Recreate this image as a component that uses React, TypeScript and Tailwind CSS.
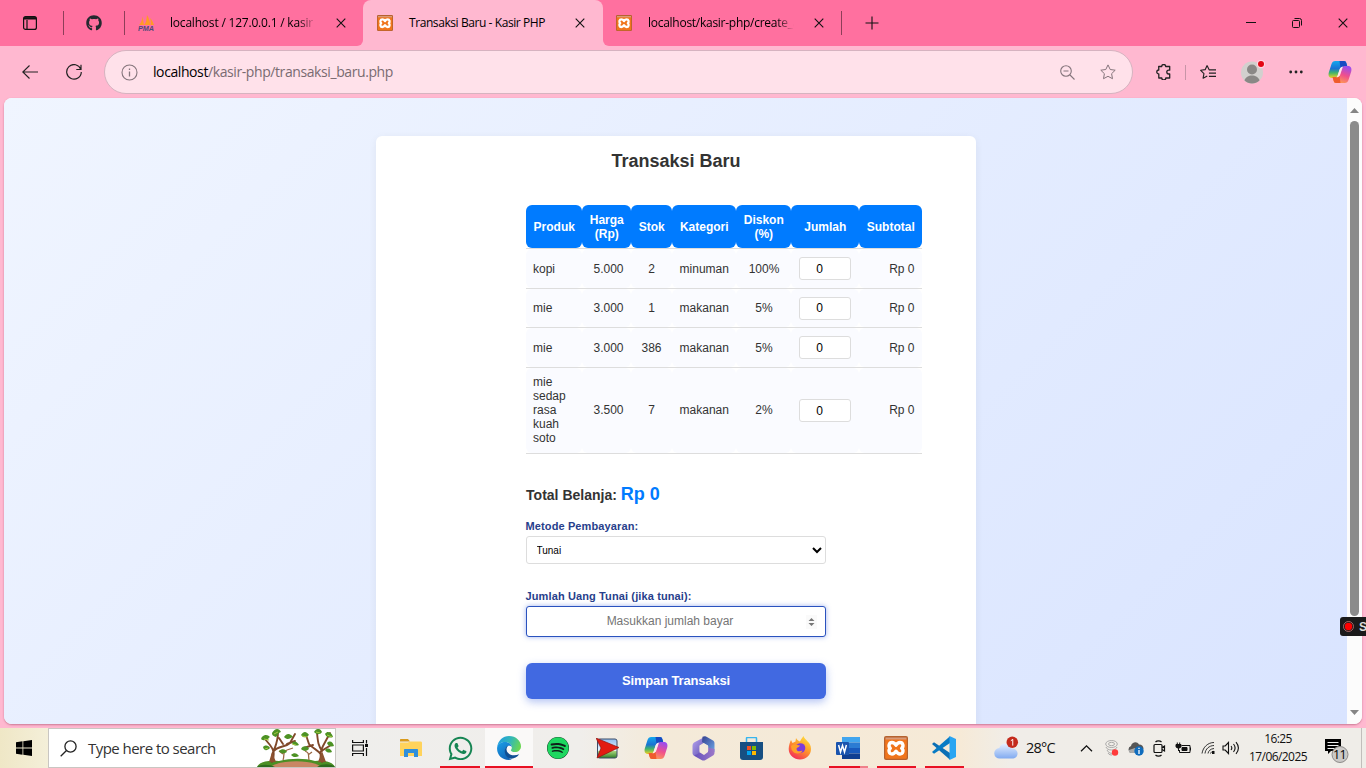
import type { ReactNode } from "react";
import { FaGithub, FaSpotify, FaWhatsapp } from "react-icons/fa";

const ui = "font-['Open_Sans','Noto_Sans',sans-serif]";

function CloseX({ size = 10 }: { size?: number }) {
  return (
    <svg width={size} height={size} viewBox="0 0 10 10" fill="none" stroke="#111" strokeWidth="1.1">
      <path d="M.7.7l8.6 8.6M9.3.7L.7 9.3" />
    </svg>
  );
}

function Xampp({ size }: { size: number }) {
  return (
    <svg className="shrink-0" width={size} height={size} viewBox="0 0 24 24">
      <rect width="24" height="24" rx="2" fill="#b5622f" />
      <rect x="1.200" y="2.200" width="21.600" height="20.600" rx="1.500" fill="#f0751c" />
      <path d="M1.500 1.500h21v2h-21z" fill="#d99a78" />
      <path
        d="M12 9.200C11 7.500 10 6.500 8 6.500 5 6.500 4 10.300 6.300 12.300 4 14.300 5 18 8 18c2 0 3-1.200 4-2.800 1 1.600 2 2.800 4 2.800 3 0 4-3.700 1.700-5.700C20 10.300 19 6.500 16 6.500c-2 0-3 1-4 2.700z"
        fill="none"
        stroke="#fff"
        strokeWidth="3.400"
        strokeLinejoin="round"
      />
    </svg>
  );
}

function Copilot({ size, id }: { size: number; id: string }) {
  return (
    <svg width={size} height={size} viewBox="0 0 24 24">
      <defs>
        <linearGradient id={id + "a"} x1="0" y1="0" x2="0" y2="1">
          <stop offset="0" stopColor="#14a8ee" />
          <stop offset=".45" stopColor="#1a72d2" />
          <stop offset=".7" stopColor="#42b568" />
          <stop offset="1" stopColor="#f4cf24" />
        </linearGradient>
        <linearGradient id={id + "b"} x1=".7" y1="0" x2=".3" y2="1">
          <stop offset="0" stopColor="#9a4cf0" />
          <stop offset=".5" stopColor="#f0508c" />
          <stop offset="1" stopColor="#ffa052" />
        </linearGradient>
      </defs>
      <path d="M11 1h5c1.500 0 2 .8 2.500 2.500L19.500 7H15c-2 0-2.800 1-3.300 2.500L9.500 16c-.5 1.500-1 2-2.500 2H4C1 18 0 15.500.8 12.500L3.500 4C4.200 2 5.200 1 7.300 1z" fill={`url(#${id}a)`} />
      <path d="M11.500 1H16c1.500 0 2 .8 2.500 2.500L19.500 7H15l-2.500 1z" fill="#174ac2" />
      <path d="M13 23H8c-1.500 0-2-.8-2.500-2.500L4.500 17H9c2 0 2.800-1 3.300-2.500L14.500 8c.5-1.500 1-2 2.500-2h3c3 0 4 2.500 3.200 5.500L20.500 20c-.7 2-1.700 3-3.800 3z" fill={`url(#${id}b)`} />
      <path d="M12.500 23H8c-1.500 0-2-.8-2.500-2.500L4.500 17H9l2.500-1z" fill="#ef5b2d" />
      <path d="M11.500 9.500C12.200 7.500 13.500 6.500 15.500 6.500c-1 .6-1.300 1.200-1.600 2.200L12 14.500c-.7 2-1.800 2.800-3.700 2.800 1-.6 1.200-1.300 1.500-2.200z" fill="#fde8ec" />
    </svg>
  );
}

function TabBar() {
  return (
    <div className={`${ui} flex h-[46px] shrink-0 bg-[#ffb8d0] text-[12px] text-black`}>
      <div className="flex w-[363px] items-center rounded-br-md bg-[#ff709f]">
        <div className="flex w-[63px] justify-center pr-[3px]">
          <svg width="14" height="14" viewBox="0 0 14 14" fill="none" stroke="#111" strokeWidth="1.200">
            <rect x=".6" y=".6" width="12.800" height="12.800" rx="2" />
            <path d="M1 2.300h12" strokeWidth="2.400" />
            <path d="M4 4v9" />
          </svg>
        </div>
        <div className="h-6 w-px bg-[#8d3e58]" />
        <div className="flex w-[60px] justify-center">
          <FaGithub size={16} color="#24292f" />
        </div>
        <div className="h-6 w-px bg-[#8d3e58]" />
        <svg className="ml-[13px]" width="17" height="16" viewBox="0 0 17 16">
          <path d="M1 10C4 7 4 4 4.500 1.500L6 10zM6 10c2.500-3 2.500-6 3-10 2 3 3 6 3 10zM12.500 10c.5-3 0-5-.5-7 2.500 2 3 5 4 7z" fill="#ff9a25" />
          <text x="0" y="15.500" fontFamily="Liberation Sans" fontWeight="bold" fontStyle="italic" fontSize="7" textLength="16" lengthAdjust="spacingAndGlyphs" fill="#4c4a78">PMA</text>
        </svg>
        <div className="ml-[15px] w-[146px] overflow-hidden whitespace-nowrap tracking-[-0.2px] [mask-image:linear-gradient(90deg,#000_88%,transparent_100%)]">
          localhost / 127.0.0.1 / kasir |
        </div>
        <div className="ml-[20px]"><CloseX /></div>
      </div>
      <div className="w-[240px] bg-[#ff709f]">
        <div className="flex h-[46px] items-center rounded-t-lg bg-[#ffb8d0] pl-[14px]">
          <Xampp size={16} />
          <div className="ml-[16px] w-[166px] whitespace-nowrap tracking-[-0.42px]">Transaksi Baru - Kasir PHP</div>
          <CloseX />
        </div>
      </div>
      <div className="flex flex-1 items-center rounded-bl-md bg-[#ff709f] pl-[13px]">
        <Xampp size={16} />
        <div className="ml-[16px] w-[146px] overflow-hidden whitespace-nowrap tracking-[-0.27px] [mask-image:linear-gradient(90deg,#000_88%,transparent_100%)]">
          localhost/kasir-php/create_a
        </div>
        <div className="ml-[20px]"><CloseX /></div>
        <div className="ml-[17px] h-6 w-px bg-[#8d3e58]" />
        <svg className="ml-[23px]" width="14" height="14" viewBox="0 0 14 14" stroke="#111" strokeWidth="1.100">
          <path d="M7 .5v13M.5 7h13" />
        </svg>
        <div className="ml-auto flex items-center gap-[36px] pr-[18px]">
          <svg width="10" height="10" viewBox="0 0 10 10" stroke="#111"><path d="M0 4.500h10" /></svg>
          <svg width="10" height="10" viewBox="0 0 10 10" fill="none" stroke="#111">
            <rect x=".5" y="2.500" width="7" height="7" rx="1" />
            <path d="M2.500.5h5a2 2 0 012 2v5" />
          </svg>
          <CloseX />
        </div>
      </div>
    </div>
  );
}

const star = "M8 .9l2.200 4.600 5 .7-3.600 3.500.9 5L8 12.300l-4.500 2.400.9-5L.8 6.200l5-.7z";

function Toolbar() {
  return (
    <div className={`${ui} flex h-[52px] shrink-0 items-center bg-[#ffb8d0]`}>
      <svg className="ml-[22px]" width="16" height="14" viewBox="0 0 16 14" fill="none" stroke="#222" strokeWidth="1.100">
        <path d="M16 7H.8M7.500.5L.8 7l6.700 6.500" />
      </svg>
      <svg className="ml-[28px]" width="16" height="16" viewBox="0 0 16 16" fill="none" stroke="#222" strokeWidth="1.200">
        <path d="M14.800 5.200A7.300 7.300 0 1015.300 8M15 .8v4.700h-4.700" />
      </svg>
      <div className="ml-[22px] flex h-[44px] w-[1029px] items-center rounded-full border border-[#d6b3c0] bg-[#ffe1ea] pl-[16px]">
        <svg width="17" height="17" viewBox="0 0 17 17" fill="none" stroke="#85757c" strokeWidth="1.100">
          <circle cx="8.500" cy="8.500" r="7.500" />
          <path d="M8.500 7.500V12.500M8.500 4.400V6" strokeWidth="1.300" />
        </svg>
        <div className="ml-[15px] pb-px whitespace-nowrap text-[14px] tracking-[-0.41px] text-[#796b71]">
          <span className="text-black">localhost</span>/kasir-php/transaksi_baru.php
        </div>
        <svg className="mr-[25px] ml-auto" width="15" height="15" viewBox="0 0 15 15" fill="none" stroke="#85757c" strokeWidth="1.100">
          <circle cx="6" cy="6" r="5.300" />
          <path d="M10 10l4.500 4.500M3.500 6h5" />
        </svg>
        <svg className="mr-[16px]" width="16" height="16" viewBox="0 0 16 16" fill="none" stroke="#85757c" strokeLinejoin="round">
          <path d={star} />
        </svg>
      </div>
      <svg className="ml-[23px]" width="15" height="16" viewBox="0 0 15 16" fill="none" stroke="#222" strokeWidth="1.300" strokeLinejoin="round">
        <path d="M2.700 2.500h3a2 2 0 014 0h4v3.700h-1a1.900 1.900 0 000 3.800h1v4H9.800a2 2 0 01-4 0h-3V10a2 2 0 010-4z" />
      </svg>
      <div className="ml-[14px] h-[15px] w-px bg-[#c795a7]" />
      <svg className="ml-[14px]" width="16" height="16" viewBox="0 0 17 16" fill="none" stroke="#222" strokeWidth="1.200" strokeLinejoin="round">
        <path d="M7.500 1L5.500 5.500.7 6.200l3.500 3.500-.9 4.900 4.400-2.400M7.500 1l2.200 4.700H17M9.500 9.200H17M9.500 12.700H17" />
      </svg>
      <svg className="ml-[25px]" width="24" height="24" viewBox="0 0 24 24">
        <circle cx="11" cy="12.500" r="11" fill="#d2d0ce" />
        <circle cx="11" cy="9.500" r="5" fill="#8a8886" />
        <path d="M3.500 20.500c1-3.500 4-5 7.500-5s6.500 1.500 7.500 5c-4 4-11 4-15 0z" fill="#8a8886" />
        <circle cx="20" cy="4" r="4.200" fill="#ffd5e1" />
        <circle cx="20" cy="4" r="3" fill="#e30613" />
      </svg>
      <svg className="ml-[24px]" width="14" height="4" viewBox="0 0 14 4" fill="#222">
        <circle cx="1.700" cy="2" r="1.400" /><circle cx="7" cy="2" r="1.400" /><circle cx="12.300" cy="2" r="1.400" />
      </svg>
      <div className="ml-[25px]"><Copilot size={24} id="top" /></div>
    </div>
  );
}

const columns = "grid grid-cols-[56px_49px_41px_64px_55px_68px_63px]";
const products = [
  { name: "kopi", price: "5.000", stock: "2", category: "minuman", discount: "100%", height: "h-[40px]" },
  { name: "mie", price: "3.000", stock: "1", category: "makanan", discount: "5%", height: "h-[39px]" },
  { name: "mie", price: "3.000", stock: "386", category: "makanan", discount: "5%", height: "h-[40px]" },
  { name: "mie sedap rasa kuah soto", price: "3.500", stock: "7", category: "makanan", discount: "2%", height: "h-[86px] leading-[14px]" },
];

function Cell({ children, className }: { children: ReactNode; className: string }) {
  return <div className={`flex items-center rounded-md bg-[#fafbff] ${className}`}>{children}</div>;
}

function ProductTable() {
  return (
    <div className="w-[396px] text-[12px] leading-[14px] text-[#333]">
      <div className={`${columns} h-[44px] border-b border-[#ddd] text-center font-bold text-white`}>
        {["Produk", "Harga (Rp)", "Stok", "Kategori", "Diskon (%)", "Jumlah", "Subtotal"].map((h) => (
          <div key={h} className="flex items-center justify-center rounded-md bg-[#007bff] pr-[4px] pl-[5.5px]">{h}</div>
        ))}
      </div>
      {products.map((p, i) => (
        <div key={i} className={`${columns} ${p.height} border-b border-[#ddd]`}>
          <Cell className={i === 3 ? "pr-[10px] pb-[2px] pl-[7.5px]" : "pr-[10px] pl-[7.5px]"}>{p.name}</Cell>
          <Cell className={i === 3 ? "justify-end pr-[7px] pb-[2px]" : "justify-end pr-[7px]"}>{p.price}</Cell>
          <Cell className={i === 3 ? "justify-center pb-[2px] pl-px" : "justify-center pl-px"}>{p.stock}</Cell>
          <Cell className={i === 3 ? "justify-center pb-[2px] pl-[1.5px]" : "justify-center pl-[1.5px]"}>{p.category}</Cell>
          <Cell className={i === 3 ? "justify-center pb-[2px] pl-[2px]" : "justify-center pl-[2px]"}>{p.discount}</Cell>
          <Cell className="justify-center">
            <input defaultValue="0" className="h-[23px] w-[52px] rounded-[3px] border border-[#ddd] bg-white pr-[10px] text-center text-black" />
          </Cell>
          <Cell className={i === 3 ? "justify-end pr-[7px] pb-[2px]" : "justify-end pr-[7px]"}>Rp 0</Cell>
        </div>
      ))}
    </div>
  );
}

function Page() {
  return (
    <div className="flex h-[630px] shrink-0 bg-[#ffb8d0] px-1 pb-1">
      <div className="flex flex-1 overflow-hidden rounded-lg bg-white shadow-[0_1px_2px_rgba(150,60,90,0.5)]">
        <div className="flex flex-1 justify-center overflow-hidden bg-linear-135 from-[#f0f5ff] to-[#d9e4ff] pt-[38px] font-['Liberation_Sans',Arial,sans-serif]">
          <div className="h-[640px] w-[600px] rounded-md bg-white pl-[150px] shadow-[0_2px_8px_rgba(0,0,0,0.06)]">
            <h1 className="w-[301px] pt-[14px] text-center text-[18px] leading-[22px] font-bold text-[#333]">Transaksi Baru</h1>
            <div className="pt-[33px]"><ProductTable /></div>
            <div className="mt-[29px] h-[22px] pl-[0.6px] text-[14px] leading-[22px] font-bold whitespace-nowrap text-[#333]">
              Total Belanja: <span className="text-[18px] text-[#007bff]">Rp 0</span>
            </div>
            <div className="mt-[14px] h-[17px] text-[11px] leading-[14px] font-bold tracking-[0.12px] text-[#27408b]">Metode Pembayaran:</div>
            <select className="block h-[28px] w-[300px] rounded-[3px] border border-[#ddd] bg-white px-[6px] text-[10px] text-black">
              <option>Tunai</option>
            </select>
            <div className="mt-[25px] h-[17px] text-[11px] leading-[14px] font-bold tracking-[0.12px] text-[#27408b]">Jumlah Uang Tunai (jika tunai):</div>
            <div className="flex h-[31px] w-[300px] items-center rounded-[3px] border border-[#2a52be] bg-white pr-[8px] shadow-[0_0_5px_rgba(65,105,225,0.5)]">
              <input placeholder="Masukkan jumlah bayar" className="h-full min-w-0 flex-1 pb-[2px] pl-[8px] text-center text-[12px] outline-none placeholder:text-[#757575]" />
              <div className="grid h-[14px] w-[11px] place-items-center bg-[#fafafa]">
                <svg width="7" height="8" viewBox="0 0 7 8" fill="#777"><path d="M.5 3L3.500 0l3 3zM.5 5l3 3 3-3z" /></svg>
              </div>
            </div>
            <button className="mt-[26px] block h-[36px] w-[300px] rounded-md bg-[#4169e1] pb-px pl-px text-[14px] font-bold text-white shadow-[0_3px_8px_rgba(65,105,225,0.4)]">
              <span className="inline-block text-[13px] tracking-[-0.15px]">Simpan Transaksi</span>
            </button>
          </div>
        </div>
        <div className="flex w-[15px] flex-col items-center bg-[#fcfcfc] pt-[10px] pb-[9px]">
          <svg width="9" height="5" viewBox="0 0 9 5" fill="#858585"><path d="M0 5l4.500-5L9 5z" /></svg>
          <div className="mt-[8px] h-[495px] w-[9px] rounded-full bg-[#8b8b8b]" />
          <svg className="mt-auto" width="9" height="5" viewBox="0 0 9 5" fill="#858585"><path d="M0 0h9L4.500 5z" /></svg>
        </div>
      </div>
    </div>
  );
}

function Trees() {
  return (
    <svg width="78" height="38" viewBox="0 0 78 38" fill="none">
      <path d="M0 38c3-6 12-7 22-6 12-3 26-3 36 0 8-1 17 0 20 6z" fill="#4c8f25" />
      <path d="M14 38c6-7 42-8 50 0z" fill="#c98664" />
      <path d="M0 38c4-3 12-3 18 0zM60 38c6-4 15-3 18 0z" fill="#2d6b1d" />
      <path d="M15 33c3-8 2-12-2-17L8 10M15 27c2-8 6-12 6-24M16 23c5-7 12-4 17-9l5-9M26 15l-4-6M30 15l8-3M65 33c-3-8-1-12 1-16l7-13M65 27c-4-7-8-6-13-12l-3-9M65 22c-4-6-4-9-5-18M56 16l-9 3M66 21l8-5" stroke="#80492a" strokeWidth="1.900" strokeLinecap="round" />
      <path d="M12 33l3-10 4 10zM61 33l4-11 4 11z" fill="#8d5230" />
      <path d="M26 31c2-5-1-8 4-10l6-2M26 25l-4-3M52 31c-1-5 1-7-4-9M51 26l4-3" stroke="#9a6843" strokeWidth="1.300" />
      <g fill="#4d9224">
        <path d="M15 4c3-5 7-5 9-1-2 0-3 3-5 5-2-1-4-1-4-4zM5 8c3-3 6-2 8 0-2 1-2 4-5 3-3 1-5-1-3-3zM6 18c3-3 6-1 7 1-3 3-6 3-7-1zM27 8c3-5 7-3 9 0-3 1-5 4-9 0zM35 14c3-3 5-1 7 2-3 1-5 1-7-2zM22 22c3-3 7-2 8 1-3 2-6 2-8-1z" />
        <path d="M44 6c3-5 6-3 8 0-2 2-5 4-8 0zM57 3c3-5 7-3 8 0-2 3-5 3-8 0zM68 5c3-4 7-1 8 3-4 1-6 1-8-3zM70 14c3-3 6-1 7 3-3 1-6 0-7-3zM44 20c2-4 7-3 8 0-3 3-6 2-8 0zM34 26c3-3 6-2 8 1-4 2-6 1-8-1zM68 21c3-3 6-1 7 2-3 1-5 1-7-2z" />
      </g>
      <path d="M7 10l5 1M17 5l4-2M45 7l5 1M59 3l4 1M70 6l5 2M35 15l4 1M8 20l3-1" stroke="#a4c83f" />
    </svg>
  );
}

function TaskIcon({ children, className = "w-[48px]", line }: { children: ReactNode; className?: string; line?: string }) {
  return (
    <div className={`flex h-[40px] shrink-0 flex-col items-center ${className}`}>
      <div className="grid h-[38px] place-items-center pt-[2px]">{children}</div>
      {line && <div className={`h-[2px] bg-[#e81123] ${line}`} />}
    </div>
  );
}

function Apps() {
  return (
    <>
      <TaskIcon>
        <svg width="17" height="16" viewBox="0 0 17 16" fill="none" stroke="#111" strokeWidth="1.200">
          <path d="M.6 0v2.500h10.800V0M.6 16v-2.500h10.800V16M.6 5h10.800v6H.6zM14.500 0v3.500M14.500 8v8" />
          <path d="M13 4h3v3h-3z" fill="#111" stroke="none" />
        </svg>
      </TaskIcon>
      <TaskIcon className="ml-[3px] w-[48px]">
        <svg width="22" height="19" viewBox="0 0 22 19">
          <path d="M0 1c0-.6.400-1 1-1h7l2 2.500H0z" fill="#d99a1c" />
          <path d="M0 3.500h8l2-1h10.500c1 0 1.500.5 1.500 1.500v13H0z" fill="#ffd35c" />
          <path d="M4 18v-7c0-.6.400-1 1-1h12c.6 0 1 .4 1 1v7h-4v-4H8v4z" fill="#2f8fdb" />
        </svg>
      </TaskIcon>
      <TaskIcon className="ml-px w-[48px]" line="w-[40px]"><FaWhatsapp size={27} color="#168553" /></TaskIcon>
      <TaskIcon className="ml-px w-[48px] bg-[#faf9f8]" line="w-full">
        <svg width="24" height="24" viewBox="0 0 24 24">
          <defs>
            <linearGradient id="eg" x1="0" x2="1" y1=".2" y2=".5"><stop stopColor="#1e9be4" /><stop offset=".55" stopColor="#35b9b4" /><stop offset="1" stopColor="#69d653" /></linearGradient>
            <linearGradient id="eb" x1="0" x2=".6" y1="0" y2="1"><stop stopColor="#1aa0e8" /><stop offset="1" stopColor="#1265b8" /></linearGradient>
          </defs>
          <path d="M.2 11C1 4.500 6 0 12 0c7 0 12 5 12 10.200 0 3.500-2.700 5.800-6 5.800-2.500 0-4.200-1-4.200-1.800 0-.5 1-1 1-2.800C14.800 8.500 12 6 8 6 4 6 1.200 8 .2 11z" fill="url(#eg)" />
          <path d="M.2 11C1 8 4 6 8 6c4 0 6.800 2.500 6.800 5-1-1.200-2.500-1.800-4-1-5 3-2.500 11 4 13.600C6 25.500-1 19 .2 11z" fill="url(#eb)" />
          <path d="M10.200 10c-3.500 2.500-3.200 8.500.5 11.500 3.500 2.500 8.300 1 11.500-3.200-6 2.500-12 .2-12.600-4.300-.2-1.500.200-2.800 1.200-4z" fill="#104f93" />
        </svg>
      </TaskIcon>
      <TaskIcon className="ml-px w-[48px]">
        <span className="rounded-full bg-[#10201a]"><FaSpotify size={22} color="#1ed760" /></span>
      </TaskIcon>
      <TaskIcon className="ml-px w-[48px]">
        <svg width="23" height="21" viewBox="0 0 23 21">
          <defs><linearGradient id="sky" x1="0" x2="0" y1="0" y2="1"><stop stopColor="#8fbdf0" /><stop offset=".6" stopColor="#eef6ff" /><stop offset=".65" stopColor="#a4d47c" /><stop offset="1" stopColor="#2e7d27" /></linearGradient></defs>
          <rect x="1.500" y="1" width="19.500" height="19" rx="2" fill="url(#sky)" stroke="#3d4c68" />
          <path d="M0 0l23 9.500L1 20l4-10z" fill="#e21b12" stroke="#8f1410" strokeWidth=".7" />
        </svg>
      </TaskIcon>
      <TaskIcon className="ml-px w-[48px]"><Copilot size={24} id="task" /></TaskIcon>
      <TaskIcon>
        <svg className="-ml-px" width="23" height="25" viewBox="0 0 23 25">
          <defs>
            <linearGradient id="o1" x1="0" x2="1" y1="0" y2="1"><stop stopColor="#bba7f2" /><stop offset="1" stopColor="#594cae" /></linearGradient>
            <linearGradient id="o2" x1="0" x2="1" y1="0" y2="1"><stop stopColor="#33408f" /><stop offset="1" stopColor="#6ea7e8" /></linearGradient>
            <linearGradient id="o3" x1="0" x2="1" y1="0" y2="0"><stop stopColor="#6450bd" /><stop offset="1" stopColor="#9c78c8" /></linearGradient>
          </defs>
          <path d="M14 .3L3 6C1 7.200.5 8 .5 10v7c0 1.500.8 2.300 2 3l5-3.500v-7L14 5.500z" fill="url(#o1)" />
          <path d="M10.500.8c1.500-.8 2.500-.8 4 0l6.500 3.700c1 .7 1.500 1.500 1.500 3V16l-6.500-2.500v-4L10 6z" fill="url(#o2)" />
          <path d="M22.500 13v3.500c0 1.500-.5 2.200-1.500 3l-7.500 4.500c-1.500.8-2.500.8-4 0L2 19.800l5.500-3.500L12 19l4-3v-4.500z" fill="url(#o3)" />
          <path d="M12 7.600l4.200 2.500v5L12 17.600l-4.200-2.500v-5z" fill="#f4ead9" />
        </svg>
      </TaskIcon>
      <TaskIcon>
        <svg className="-ml-px" width="23" height="23" viewBox="0 0 23 23">
          <path d="M6.500 6V1.500c0-.6.400-1 1-1h8c.6 0 1 .4 1 1V6" fill="none" stroke="#37b5ee" strokeWidth="1.500" />
          <path d="M0 5h23v15c0 2-1 3-3 3H3c-2 0-3-1-3-3z" fill="#174f82" />
          <path d="M7 9h4v4H7z" fill="#f25022" /><path d="M12 9h4v4h-4z" fill="#7fba00" /><path d="M7 14h4v4H7z" fill="#00a4ef" /><path d="M12 14h4v4h-4z" fill="#ffb900" />
        </svg>
      </TaskIcon>
      <TaskIcon>
        <svg width="24" height="24" viewBox="0 0 24 24">
          <defs><linearGradient id="fx" x1=".8" x2=".2" y1="0" y2="1"><stop stopColor="#ffe23d" /><stop offset=".45" stopColor="#ff982b" /><stop offset="1" stopColor="#f2245c" /></linearGradient></defs>
          <path d="M3 4l1.500 3 3-1.500.5-3.500c1 2 2.500 3 4 3.500C13 3.500 14 2 15.500 0c1 4 7.500 6 7.500 13 0 6-5 10.500-11 10.500S.7 19 .7 13C.7 9.500 2 6 3 4z" fill="url(#fx)" />
          <circle cx="12.500" cy="12" r="4.800" fill="#7d3bdb" />
          <path d="M3 10c3-3 6-1 9-.5-.5 1.500-3 2-3.500 3 0 3 3 3.500 6 2-1 3.500-8 5-11-1z" fill="#ff9f28" />
        </svg>
      </TaskIcon>
      <TaskIcon line="w-[39px] border-r-8 border-[#f0808a]">
        <svg width="24" height="22" viewBox="0 0 24 22">
          <path d="M6 0h18v5.500H6z" fill="#41a5ee" /><path d="M6 5.500h18V11H6z" fill="#2b7cd3" /><path d="M6 11h18v5.500H6z" fill="#185abd" /><path d="M6 16.500h18V22H6z" fill="#103f91" />
          <rect y="5" width="13" height="13" rx="1" fill="#1a54ae" />
          <path d="M2.600 8l1.900 7 2-6.500 2 6.500 1.900-7" fill="none" stroke="#fff" strokeWidth="1.500" />
        </svg>
      </TaskIcon>
      <TaskIcon line="w-[39px]"><Xampp size={24} /></TaskIcon>
      <TaskIcon line="w-[39px]">
        <svg width="24" height="24" viewBox="0 0 24 24">
          <path d="M2 6.200L0 8l18 15.800V17z" fill="#0b6fb5" />
          <path d="M2 17.800L0 16 18 .2V7z" fill="#087bc4" />
          <path d="M17.500 0L24 3v18l-6.500 3z" fill="#29a5f2" />
        </svg>
      </TaskIcon>
    </>
  );
}

function Tray() {
  return (
    <div className="ml-[26px] flex flex-1 items-center">
      <svg width="25" height="24" viewBox="0 0 26 24">
        <defs><linearGradient id="cl" x1="0" x2="0" y1="0" y2="1"><stop stopColor="#e8f1ff" /><stop offset="1" stopColor="#80aaf0" /></linearGradient></defs>
        <path d="M6 23a5.500 5.500 0 01-.5-11C6.500 8 10 6.500 13 7.500c3 .8 4.500 3 5 5 3.500-.5 6.500 2 6.500 5.200 0 3-2.500 5.300-5.500 5.300z" fill="url(#cl)" />
        <circle cx="19" cy="6" r="6" fill="#c42b1c" />
        <path d="M17.500 4.500l2-1.500v6.500" fill="none" stroke="#fff" />
      </svg>
      <div className="ml-[7px] w-[54px] pb-px text-[14.5px] tracking-[-0.75px] text-[#111]">28°C</div>
      <svg width="13" height="7" viewBox="0 0 12 7" fill="none" stroke="#111" strokeWidth="1.300"><path d="M.5 6.300L6 .9l5.500 5.400" /></svg>
      <svg className="ml-[12px]" width="14" height="16" viewBox="0 0 14 16" fill="none" stroke="#999" strokeWidth=".8">
        <ellipse cx="6.500" cy="4" rx="5.800" ry="3.500" /><ellipse cx="6.500" cy="4" rx="3" ry="1.700" />
        <path d="M1 7c1 4 10 4 11 0M2 10c1 3 5 4 6 3M3 13c1 2 3 2 4 2" />
        <circle cx="10" cy="12.500" r="3.200" fill="#ff3b3b" stroke="none" />
      </svg>
      <svg className="ml-[8px]" width="17" height="15" viewBox="0 0 17 15">
        <path d="M4 12a3.700 3.700 0 010-7C5 1 10 0 12 3.500c3 0 4.500 2 4.500 4.500L8 12z" fill="#565656" />
        <path d="M2 9l6-2 2 3-2 2H4c-1.500 0-2.500-1-2-3z" fill="#a9a9a9" />
        <circle cx="12" cy="10" r="4.700" fill="#0f6cbd" />
        <path d="M12 9v4M12 6.700V8" stroke="#fff" strokeWidth="1.300" />
      </svg>
      <svg className="ml-[9px]" width="13" height="17" viewBox="0 0 13 17" fill="none" stroke="#111" strokeWidth="1.200">
        <rect x="1" y="4.500" width="8" height="8" rx="1" /><path d="M9 7.500l2.500-1.500v5L9 9.500M2.500 2C4 .5 7 .5 8.500 2M2.500 15c1.500 1.500 4.500 1.500 6 0" />
      </svg>
      <svg className="ml-[9px]" width="17" height="13" viewBox="0 0 17 13" fill="none" stroke="#111">
        <path d="M6.500 3.500h8.500v7H4.500V8M15.500 5.500v3" /><path d="M7 5.500h5v3H7z" fill="#111" /><path d="M1 2.500h5v2c0 2-5 2-5 0zM2.300.5v2M4.700.5v2M3.500 6v3" fill="#111" />
      </svg>
      <svg className="ml-[9px]" width="14" height="14" viewBox="0 0 14 14" fill="none" stroke="#333">
        <path d="M1 12.500C2 6 7 1.500 13 1.500M4 12.500c.5-4.500 4-7.800 9-8M7 12.500c.3-2.500 2.500-4.700 6-5M9.500 12.500c.2-1 1.200-2 3.500-2.200" /><path d="M11 10h2.500v3H11z" fill="#111" stroke="none" />
      </svg>
      <svg className="ml-[7px]" width="17" height="14" viewBox="0 0 17 14" fill="none" stroke="#111" strokeWidth="1.100">
        <path d="M1 5h2.200L6.500 1.500v11L3.200 9H1zM9 5c1 1.200 1 2.800 0 4M11.500 3c2 2.500 2 5.500 0 8M14 1.200c3 3.600 3 8 0 11.600" />
      </svg>
      <div className="ml-[9px] w-[60px] text-center text-[12px] leading-[18px] tracking-[-0.57px] whitespace-nowrap text-[#111]">
        <div>16:25</div>
        <div>17/06/2025</div>
      </div>
      <svg className="mt-[6px] ml-[16px]" width="26" height="25" viewBox="0 0 26 25">
        <path d="M1 0h16v12H7l-3 3v-3H1z" fill="#000" />
        <path d="M3.500 3.500h11M3.500 6.500h11M3.500 9.500h7" stroke="#eee" />
        <circle cx="16" cy="15.500" r="8" fill="#cbc9c7" stroke="#8e8c8a" />
        <text x="15.500" y="20" textAnchor="middle" fontFamily="Open Sans" fontSize="12.500" letterSpacing="-.7" fill="#000">11</text>
      </svg>
      <div className="mr-[4px] ml-auto h-[40px] w-px bg-[#c1bebb]" />
    </div>
  );
}

function Taskbar() {
  return (
    <div className={`${ui} flex h-[40px] shrink-0 bg-[linear-gradient(90deg,#efe7c6_0,#f4efd9_48px,#efeeec_330px,#f0eeeb_580px,#f4ead9_660px,#f6ead7_960px,#f0ede8_1010px,#efede8_100%)]`}>
      <div className="grid w-[48px] place-items-center">
        <svg width="16" height="16" viewBox="0 0 16 16" fill="#000"><path d="M0 2.200l6.500-.9v6.200H0zM7.300 1.200L16 0v7.500H7.300zM0 8.400h6.500v6.300L0 13.800zM7.300 8.400H16V16l-8.700-1.200z" /></svg>
      </div>
      <div className="flex w-[288px] items-center border border-[#c9c6c2] bg-white pl-[11px]">
        <svg width="17" height="17" viewBox="0 0 17 17" fill="none" stroke="#222" strokeWidth="1.300"><circle cx="10.500" cy="6.500" r="5.600" /><path d="M6.500 10.500L.7 16.300" /></svg>
        <div className="ml-[11px] text-[15px] tracking-[-0.54px] whitespace-nowrap text-[#333]">Type here to search</div>
        <div className="ml-auto"><Trees /></div>
      </div>
      <Apps />
      <Tray />
    </div>
  );
}

export default function App() {
  return (
    <div className="relative flex h-[768px] w-[1366px] flex-col overflow-hidden">
      <TabBar />
      <Toolbar />
      <Page />
      <Taskbar />
      <div className="absolute top-[617px] right-0 flex h-[19px] w-[26px] items-center overflow-hidden rounded-l-[3px] bg-[#1b1b1b] pl-[3px]">
        <svg className="shrink-0" width="11" height="11" viewBox="0 0 11 11"><circle cx="5.500" cy="5.500" r="5" fill="none" stroke="#c77" strokeWidth=".8" /><circle cx="5.500" cy="5.500" r="3.700" fill="#f00" /></svg>
        <span className="ml-[5px] font-['Liberation_Sans',sans-serif] text-[12px] font-bold text-[#ddd]">S</span>
      </div>
    </div>
  );
}
